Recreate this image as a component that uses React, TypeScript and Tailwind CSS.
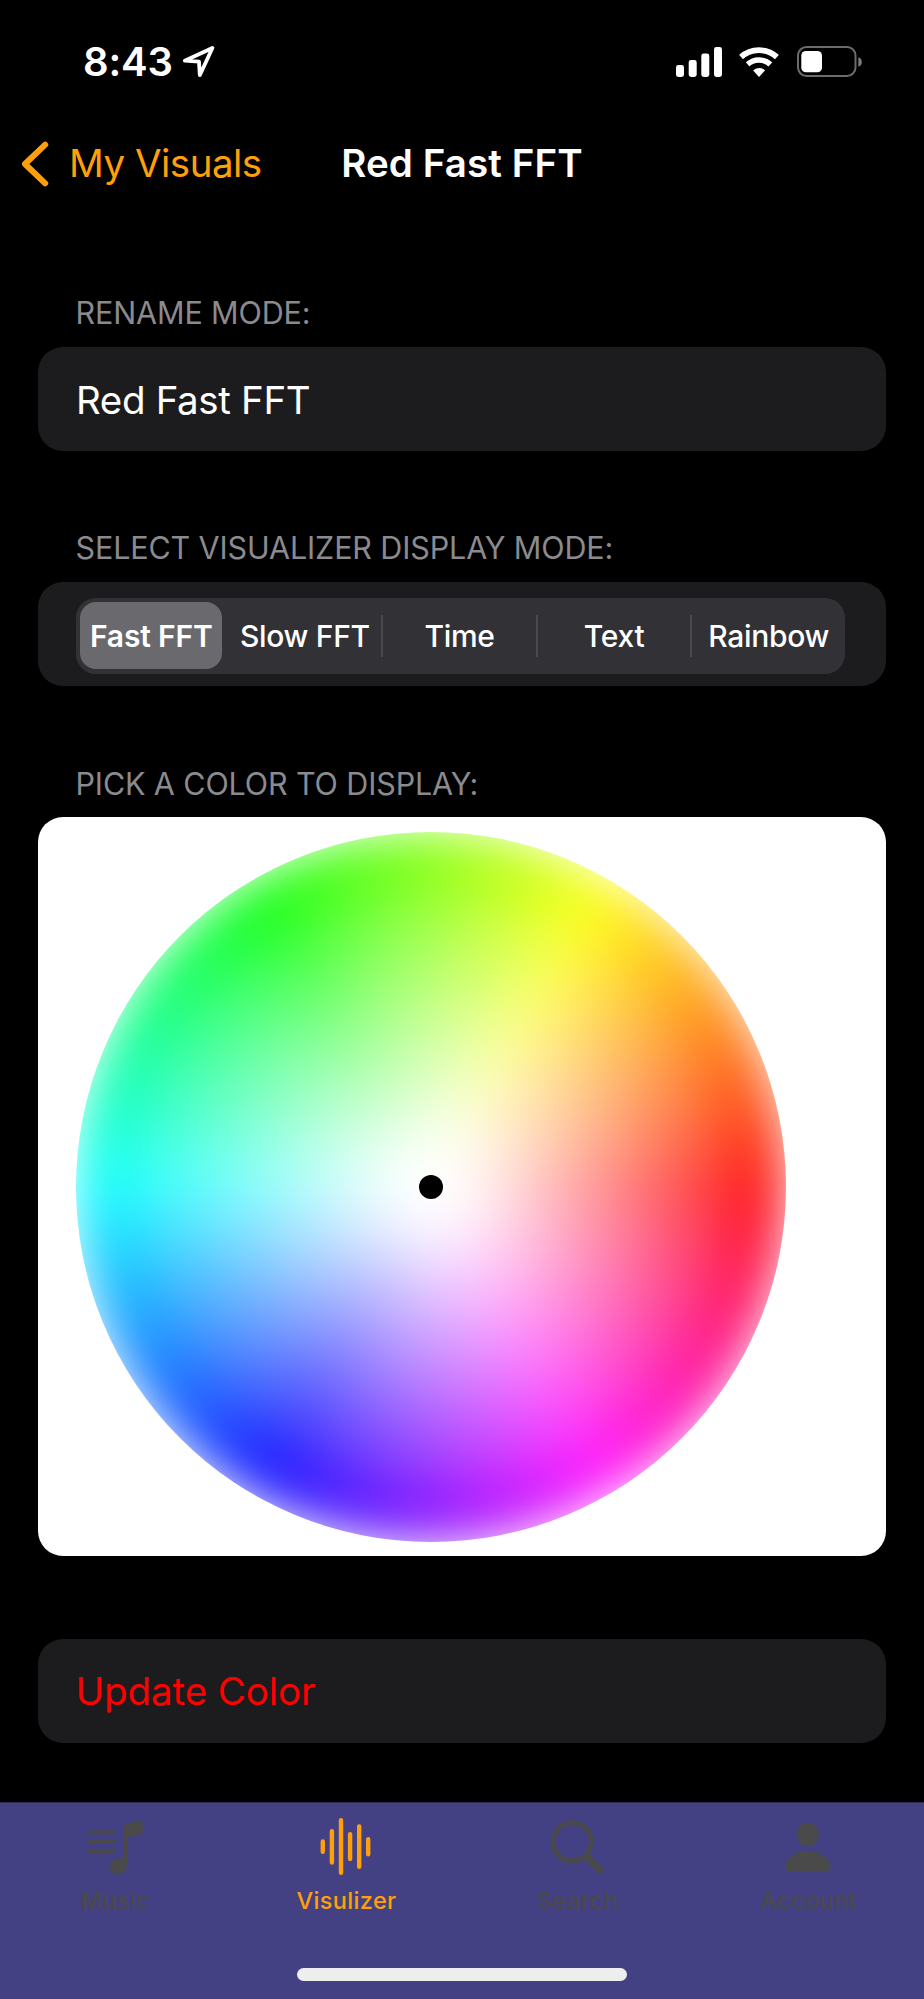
import type { ReactNode } from "react";

function LocationArrow() {
  return (
    <svg width="34" height="34" viewBox="0 0 34 34" fill="none" stroke="white" strokeWidth="3.8" strokeLinejoin="round">
      <path d="M30.4 3 2.8 15.7l14.2.9.8 13.6z" />
    </svg>
  );
}

function Signal() {
  return (
    <svg width="47" height="30" viewBox="0 0 47 30" fill="white">
      <rect x="0" y="18" width="8" height="12" rx="2.4" />
      <rect x="12.7" y="13" width="8" height="17" rx="2.4" />
      <rect x="25.3" y="6.5" width="8" height="23.5" rx="2.4" />
      <rect x="38" y="0" width="8" height="30" rx="2.4" />
    </svg>
  );
}

function Wifi() {
  return (
    <svg width="40" height="30" viewBox="0 0 40 30">
      <clipPath id="wifi-cone">
        <path d="M20 30 -6 1V-6H46V1z" />
      </clipPath>
      <g clipPath="url(#wifi-cone)" fill="none" stroke="white">
        <circle cx="20" cy="30" r="26.8" strokeWidth="5.8" />
        <circle cx="20" cy="30" r="17" strokeWidth="5.4" />
        <circle cx="20" cy="30" r="4.5" strokeWidth="9" />
      </g>
    </svg>
  );
}

function Battery() {
  return (
    <svg width="66" height="32" viewBox="0 0 66 32">
      <rect x="1" y="1" width="57.5" height="29" rx="8.5" fill="none" stroke="#6c6c6c" strokeWidth="2" />
      <rect x="4.3" y="5" width="20.7" height="21.3" rx="4.6" fill="white" />
      <path d="M61.3 11.3a4.9 4.9 0 0 1 0 9.4z" fill="#7c7c7c" />
    </svg>
  );
}

function MusicIcon() {
  return (
    <svg width="60" height="60" viewBox="0 0 60 60" fill="currentColor">
      <rect x="2.8" y="12.4" width="27.6" height="3.8" rx="1.9" />
      <rect x="2.8" y="21.8" width="27.6" height="3.8" rx="1.9" />
      <rect x="2.8" y="31.2" width="27.6" height="3.8" rx="1.9" />
      <path d="M38.7 8.6Q38.7 6.6 40.6 6L55.4 2.4Q57.8 1.9 57.8 4.2V14Q57.8 15.7 56 16.1L42.5 19.3V44C42.5 51.5 38.5 56.2 32.4 56.2C27.9 56.2 24.8 53.2 24.8 49.4C24.8 45.3 27.6 42.2 32 41.2L37 40.1Q38.7 39.7 38.7 37.8Z" />
    </svg>
  );
}

function WaveIcon() {
  return (
    <svg width="60" height="60" viewBox="0 0 60 60" stroke="currentColor" strokeWidth="4.4" strokeLinecap="round">
      <path d="M6.8 23.4V33.8M15.9 13.2V44.6M25 2.2V54.8M34.1 16.2V41M43.2 8.5V48.8M52.2 21.3V36.2" />
    </svg>
  );
}

function SearchIcon() {
  return (
    <svg width="60" height="60" viewBox="0 0 60 60" fill="none" stroke="currentColor" strokeLinecap="round">
      <circle cx="25.2" cy="23.8" r="19.2" strokeWidth="4.9" />
      <path d="M39.5 38.6 53 52.2" strokeWidth="7" />
    </svg>
  );
}

function PersonIcon() {
  return (
    <svg width="60" height="60" viewBox="0 0 60 60" fill="currentColor">
      <ellipse cx="29.8" cy="16.6" rx="11" ry="11.8" />
      <path d="M12 53.4C8.9 53.4 7.2 51.9 7.2 49.3C7.2 42 16 33 29.8 33S52.5 42 52.5 49.3C52.5 51.9 50.8 53.4 47.7 53.4Z" />
    </svg>
  );
}

function SectionLabel({ children }: { children: ReactNode }) {
  return (
    <h2 className="mb-[9px] flex h-[50px] items-center pl-[37.5px] text-[30.5px] tracking-[-0.13px] whitespace-nowrap text-[#8a8a8f]">
      {children}
    </h2>
  );
}

function Segments() {
  const base = "flex flex-1 basis-0 items-center justify-center pt-px text-[30px] font-medium tracking-[-0.3px]";
  return (
    <div className="relative flex h-[76px] w-[769px] rounded-[20px] bg-[#323136]">
      <div className="flex flex-1 basis-0 items-center justify-center text-[30px] tracking-[-0.15px]">
        <div className="mr-[3px] flex h-[66.5px] w-[142.5px] items-center justify-center rounded-[16px] bg-[#69696e] pt-px pl-px font-semibold">
          Fast FFT
        </div>
      </div>
      <div className={base}>Slow FFT</div>
      <div className="h-[42px] w-[2px] self-center bg-[#4a494e]" />
      <div className={base}>Time</div>
      <div className="h-[42px] w-[2px] self-center bg-[#4a494e]" />
      <div className={base}>Text</div>
      <div className="h-[42px] w-[2px] self-center bg-[#4a494e]" />
      <div className={base}>Rainbow</div>
    </div>
  );
}

function ColorWheel() {
  return (
    <div className="relative size-[710px] overflow-hidden rounded-full bg-white">
      <div className="grid size-full rounded-full bg-[conic-gradient(from_90deg,#f00,#f0f,#00f,#0ff,#0f0,#ff0,#f00)] blur-[25px]">
        <div className="rounded-full bg-[radial-gradient(circle_closest-side,#fff_9%,rgba(255,255,255,0))]" />
      </div>
      <div className="absolute top-1/2 left-1/2 size-[24px] -translate-1/2 rounded-full bg-black" />
    </div>
  );
}

function Tab({ icon, label, active }: { icon: ReactNode; label: string; active?: boolean }) {
  return (
    <div className={active ? "flex flex-1 flex-col items-center text-[#ff9f0a]" : "flex flex-1 flex-col items-center text-[#4a4a4b]"}>
      <div className="mr-[2px]">{icon}</div>
      <span className="mt-[8px] flex h-[30px] items-center text-[23.5px] font-medium tracking-[0.35px]">{label}</span>
    </div>
  );
}

export default function App() {
  return (
    <div className="flex h-[1999px] w-[924px] flex-col overflow-hidden bg-black font-['Inter','Liberation_Sans',sans-serif] text-white">
      <div className="flex h-[123px] items-center pr-[61px] pl-[83px]">
        <span className="text-[40px] font-semibold tracking-[-0.2px]">8:43</span>
        <div className="ml-[9px]">
          <LocationArrow />
        </div>
        <div className="ml-auto flex items-center">
          <Signal />
          <div className="mr-[18px] ml-[16px]">
            <Wifi />
          </div>
          <Battery />
        </div>
      </div>

      <nav className="grid h-[81px] grid-cols-[1fr_auto_1fr] items-center pl-[20px]">
        <div className="flex items-center gap-[19px] text-[#ff9f0a]">
          <svg width="30" height="46" viewBox="0 0 30 46" fill="none" stroke="currentColor" strokeWidth="6" strokeLinecap="round" strokeLinejoin="round">
            <path d="M25.2 3.7 5 23 25.2 42.3" />
          </svg>
          <span className="text-[38.5px] tracking-[-0.5px] whitespace-nowrap">My Visuals</span>
        </div>
        <h1 className="mr-[20px] text-[38.5px] font-semibold tracking-[0.1px] whitespace-nowrap">Red Fast FFT</h1>
      </nav>

      <main className="flex flex-col px-[38px] pt-[83.8px]">
        <SectionLabel>RENAME MODE:</SectionLabel>
        <div className="mb-[72px] flex h-[104.3px] items-center rounded-[25px] bg-[#1c1c1e] pt-[3px] pl-[38px] text-[38.5px] tracking-[-0.35px]">
          Red Fast FFT
        </div>

        <SectionLabel>SELECT VISUALIZER DISPLAY MODE:</SectionLabel>
        <div className="mb-[72px] flex h-[104.3px] rounded-[25px] bg-[#1c1c1e] pt-[15.5px] pl-[38px]">
          <Segments />
        </div>

        <SectionLabel>PICK A COLOR TO DISPLAY:</SectionLabel>
        <div className="mb-[83px] flex h-[738.8px] items-center rounded-[25px] bg-white pl-[38px]">
          <ColorWheel />
        </div>

        <button className="flex h-[104.3px] items-center rounded-[25px] bg-[#1c1c1e] pt-[2px] pl-[37.5px] text-left text-[38.5px] tracking-[-0.1px] text-[#ff0000]">
          Update Color
        </button>
      </main>

      <footer className="mt-auto flex h-[197px] flex-col items-center border-t border-[#2f2d4e] bg-[#434184] pt-[15px]">
        <div className="flex w-full">
          <Tab icon={<MusicIcon />} label="Music" />
          <Tab icon={<WaveIcon />} label="Visulizer" active />
          <Tab icon={<SearchIcon />} label="Search" />
          <Tab icon={<PersonIcon />} label="Account" />
        </div>
        <div className="mt-[52px] h-[12.5px] w-[330px] rounded-full bg-[#eeeeee]" />
      </footer>
    </div>
  );
}
